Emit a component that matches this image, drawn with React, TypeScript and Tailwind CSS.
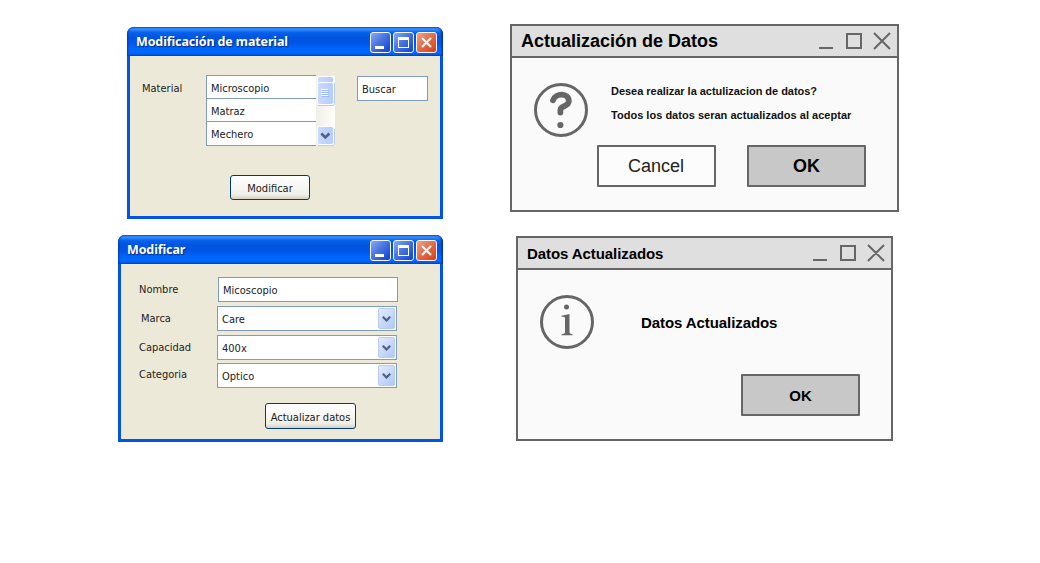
import React from "react";

const Caption = ({ kind }: { kind: "min" | "max" | "close" }) => (
  <svg width="21" height="21" viewBox="0 0 21 21" className="block">
    <defs>
      <linearGradient id={"cap-" + kind} x1="0" y1="0" x2="1" y2="1">
        <stop offset="0" stopColor={kind === "close" ? "#f3a48c" : "#8eabf3"} />
        <stop offset="0.5" stopColor={kind === "close" ? "#e36a48" : "#4470de"} />
        <stop offset="1" stopColor={kind === "close" ? "#dc3c08" : "#0b3fd0"} />
      </linearGradient>
    </defs>
    <rect x="0.5" y="0.5" width="20" height="20" rx="2.5" fill={`url(#cap-${kind})`} stroke="#f4f7ff" />
    {kind === "min" && <rect x="5" y="14" width="9" height="3" fill="#fff" />}
    {kind === "max" && <path d="M5 5h11v11H5zM6 8v7h9V8z" fill="#fff" fillRule="evenodd" />}
    {kind === "close" && <path d="M6 6l9 9M15 6l-9 9" stroke="#fff" strokeWidth="2.2" fill="none" />}
  </svg>
);

const XpWindow = ({ title, className, titleClass, children }: { title: string; className: string; titleClass: string; children: React.ReactNode }) => (
  <section className={"absolute flex flex-col rounded-t-[7px] bg-[#0055e5] font-['DejaVu_Sans_Condensed','DejaVu_Sans',sans-serif] text-[11px] leading-[14px] text-[#222] " + className}>
    <header className="flex h-[29px] shrink-0 justify-between rounded-t-[7px] bg-[linear-gradient(180deg,#0058e0_0%,#3a92ff_7%,#2480fa_11%,#0560ea_20%,#0054e0_35%,#0055e5_55%,#0066fc_75%,#0268ff_88%,#005cec_94%,#0042c4_100%)] pr-1.5 pt-[5px] shadow-[inset_2px_0_2px_-1px_#0038c0,inset_-2px_0_2px_-1px_#0020a8]">
      <h1 className={"font-['Noto_Sans',sans-serif] font-bold leading-[20px] text-white [text-shadow:1px_1px_1px_#0a2a80] " + titleClass}>{title}</h1>
      <div className="flex gap-0.5">
        <Caption kind="min" />
        <Caption kind="max" />
        <Caption kind="close" />
      </div>
    </header>
    <div className="mx-[3px] mb-[3px] grow bg-[#ece9d8]">{children}</div>
  </section>
);

const XpButton = ({ children, className }: { children: React.ReactNode; className: string }) => (
  <button className={"block whitespace-nowrap rounded-[3px] border border-[#003c74] bg-[linear-gradient(180deg,#ffffff_0%,#f6f5f1_55%,#eeede6_82%,#d6d0c5_100%)] text-center " + className}>{children}</button>
);

const Chevron = () => (
  <svg width="9" height="6" viewBox="0 0 9 6">
    <path d="M0.8 0.8L4.5 4.5L8.2 0.8" fill="none" stroke="#4d6185" strokeWidth="2.2" />
  </svg>
);

const Combo = ({ value }: { value: string }) => (
  <div className="flex h-[25px] w-[180px] justify-between border border-[#7f9db9] bg-white p-px pl-1">
    <span className="pt-[5px]">{value}</span>
    <span className="flex h-[21px] w-[17px] items-center justify-center rounded-[2px] border border-[#b9cbf3] bg-[linear-gradient(135deg,#e3ebfe,#aec8f7)]">
      <Chevron />
    </span>
  </div>
);

const SketchWindow = ({ title, className, titleClass, children }: { title: string; className: string; titleClass: string; children: React.ReactNode }) => (
  <section className={"absolute flex flex-col border-2 border-[#666] bg-[#fafafa] font-['Liberation_Sans',Arial,sans-serif] text-black " + className}>
    <header className="flex h-8 shrink-0 justify-between border-b-2 border-[#666] bg-[#dfdfdf] pl-[9px]">
      <h1 className={"whitespace-nowrap font-bold leading-[30px] " + titleClass}>{title}</h1>
      <svg width="80" height="30" viewBox="0 0 80 30" fill="none" stroke="#666" strokeWidth="2">
        <path d="M2 22h14M30 8h14v14H30zM57 7l16 16M73 7l-16 16" />
      </svg>
    </header>
    {children}
  </section>
);

const SketchButton = ({ children, className }: { children: React.ReactNode; className: string }) => (
  <button className={"h-[42px] w-[119px] rounded-[1px] border-2 border-[#666] " + className}>{children}</button>
);

const fields = [
  { label: "Marca", value: "Care", row: "h-[29px]", lab: "pl-[3px] pt-1.5" },
  { label: "Capacidad", value: "400x", row: "h-7", lab: "pl-px pt-1.5" },
  { label: "Categoria", value: "Optico", row: "h-10", lab: "pl-px pt-[5px]" },
];

export default function App() {
  return (
    <main className="relative h-[563px] w-[1040px] overflow-hidden bg-white">
      <XpWindow title="Modificación de material" className="left-[127px] top-[27px] h-[192px] w-[316px]" titleClass="pl-[9px] text-[12.5px] tracking-[-0.12px]">
        <div className="flex h-[119px] pl-3 pt-[19px]">
          <span className="w-16 pt-[7px]">Material</span>
          <ul className="h-[71px] w-[110px] border-b border-l border-[#7f9db9] bg-white">
            <li className="h-[23px] border-t border-[#7f9db9] pl-1 pt-1.5">Microscopio</li>
            <li className="h-[23px] border-t border-[#7f9db9] pl-1 pt-1.5">Matraz</li>
            <li className="h-6 border-t border-[#7f9db9] pl-1 pt-1.5">Mechero</li>
          </ul>
          <svg width="19" height="71" viewBox="0 0 19 71" className="mr-[22px] block shrink-0">
            <defs>
              <linearGradient id="track"><stop stopColor="#f0eee8" /><stop offset="1" stopColor="#fefefb" /></linearGradient>
              <linearGradient id="thumb"><stop stopColor="#cbdafd" /><stop offset="1" stopColor="#b6ccfa" /></linearGradient>
            </defs>
            <rect x="0" y="1" width="19" height="70" fill="url(#track)" />
            <rect x="1.5" y="1.5" width="16" height="12" rx="2" fill="url(#thumb)" stroke="#fff" />
            <rect x="1.5" y="7.5" width="16" height="22" rx="2" fill="url(#thumb)" stroke="#fff" />
            <path d="M2 30.5h15q1.5 0 1.5-2V8M2 70.5h15q1.5 0 1.5-2V54" fill="none" stroke="#b9ccee" />
            <path d="M5 14.5h7M5 16.5h7M5 18.5h7M5 20.5h7" stroke="#f6f9ff" />
            <path d="M6 15.5h7M6 17.5h7M6 19.5h7M6 21.5h7" stroke="#9dbcf8" />
            <rect x="1.5" y="51.5" width="16" height="18" rx="2" fill="url(#thumb)" stroke="#fff" />
            <path d="M5.3 58.5l4 4 4-4" fill="none" stroke="#4d6185" strokeWidth="2.5" />
          </svg>
          <div className="mt-px h-[25px] w-[71px] border border-[#7f9db9] bg-white pl-1 pt-1.5">Buscar</div>
        </div>
        <XpButton className="ml-[100px] h-[25px] w-20 pt-0.5">Modificar</XpButton>
      </XpWindow>

      <XpWindow title="Modificar" className="left-[118px] top-[235px] h-[207px] w-[325px]" titleClass="pl-[9px] text-[12.5px] tracking-[-0.12px]">
        <div className="pl-[17px] pt-[13px]">
          <div className="flex h-[29px]">
            <span className="w-20 pl-px pt-1.5">Nombre</span>
            <div className="h-[25px] w-[180px] border border-[#7f9db9] bg-white pl-1 pt-1.5">Micoscopio</div>
          </div>
          {fields.map((f) => (
            <div key={f.label} className={"flex " + f.row}>
              <span className={"w-[79px] " + f.lab}>{f.label}</span>
              <Combo value={f.value} />
            </div>
          ))}
        </div>
        <XpButton className="ml-36 h-[26px] w-[91px] pt-[3px]">Actualizar datos</XpButton>
      </XpWindow>

      <SketchWindow title="Actualización de Datos" className="left-[510px] top-[24px] h-[188px] w-[389px]" titleClass="text-[18px]">
        <div className="flex h-[87px] pl-[22px] pt-[25px]">
          <svg width="54" height="54" viewBox="0 0 54 54" fill="none" stroke="#666" className="block shrink-0">
            <circle cx="27" cy="27" r="25.5" strokeWidth="3" />
            <path d="M19 17.3C21.5 9.5 34.8 9.5 34.8 18C34.8 24 26.4 22.5 26.4 27V29.5" strokeWidth="5.8" strokeLinecap="round" />
            <circle cx="26.4" cy="42" r="3.1" fill="#666" stroke="none" />
          </svg>
          <div className="-mt-1 whitespace-nowrap pl-[23px] text-[11px] font-bold leading-6 text-[#111]">
            <p className="tracking-[-0.03px]">Desea realizar la actulizacion de datos?</p>
            <p className="tracking-[0.02px]">Todos los datos seran actualizados al aceptar</p>
          </div>
        </div>
        <div className="flex gap-[31px] pl-[85px]">
          <SketchButton className="bg-[#fcfcfc] pr-px text-[18px] text-[#222]">Cancel</SketchButton>
          <SketchButton className="bg-[#c8c8c8] text-[18px] font-bold">OK</SketchButton>
        </div>
      </SketchWindow>

      <SketchWindow title="Datos Actualizados" className="left-[516px] top-[236px] h-[205px] w-[377px]" titleClass="text-[15px] tracking-[-0.08px] pt-px">
        <div className="flex h-[104px] pl-[22px] pt-[25px]">
          <svg width="54" height="54" viewBox="0 0 54 54" className="block shrink-0 overflow-visible">
            <circle cx="27" cy="27" r="27" fill="#fafafa" stroke="#fff" strokeWidth="2" />
            <circle cx="27" cy="27" r="25.5" fill="none" stroke="#666" strokeWidth="3" />
            <circle cx="26.5" cy="12" r="2.5" fill="#666" />
            <path d="M21.5 20.8L29.5 19V37C29.5 38.5 30.5 39 32.5 39.3V40.3H21.5V39.3C24 39 25 38.5 25 37V23.5C25 22 24 21.7 21.5 21.8Z" fill="#666" />
          </svg>
          <p className="pl-[47px] pt-[18px] text-[15px] font-bold leading-5 tracking-[-0.08px]">Datos Actualizados</p>
        </div>
        <div className="pl-[223px]">
          <SketchButton className="bg-[#c8c8c8] pt-0.5 text-[15px] font-bold">OK</SketchButton>
        </div>
      </SketchWindow>
    </main>
  );
}
